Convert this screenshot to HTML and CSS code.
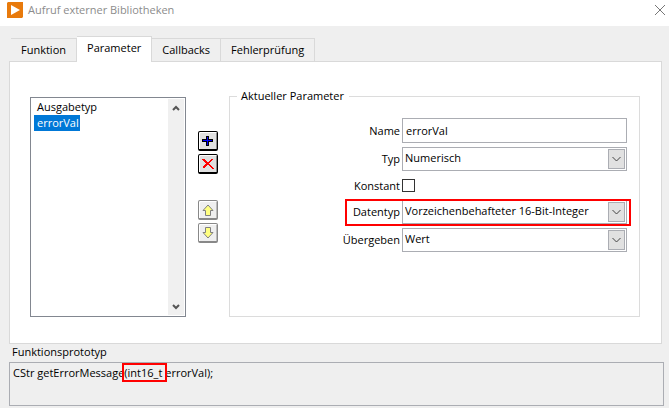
FILE: index.html
```html
<!DOCTYPE html>
<html lang="de">
<head>
    <meta charset="UTF-8">
    <meta name="viewport" content="width=device-width, initial-scale=1.0">
    <title>Aufruf externer Bibliotheken</title>
    <link rel="stylesheet" href="styles.css">
</head>
<body>
    <header class="titlebar">
        <svg class="logo" width="16" height="16" viewBox="0 0 16 16">
            <path d="M1 0H16V15L15 16H0V1Z" fill="#e87a0c"/>
            <path d="M4 3L13 8L4 13Z" fill="#fff"/>
        </svg>
        <h1>Aufruf externer Bibliotheken</h1>
        <button type="button" class="close" aria-label="Schließen">
            <svg width="10" height="10" viewBox="0 0 10 10">
                <path d="M0 0L10 10M10 0L0 10" stroke="#777" fill="none"/>
            </svg>
        </button>
    </header>

    <main class="dialog">
        <nav class="tabs" role="tablist">
            <button type="button" role="tab" class="tab">Funktion</button>
            <button type="button" role="tab" class="tab active" aria-selected="true">Parameter</button>
            <button type="button" role="tab" class="tab">Callbacks</button>
            <button type="button" role="tab" class="tab">Fehlerprüfung</button>
        </nav>

        <section class="panel">
            <div class="listbox">
                <ul role="listbox" aria-label="Parameter">
                    <li role="option"><span>Ausgabetyp</span></li>
                    <li role="option" aria-selected="true"><span class="selected">errorVal</span></li>
                </ul>
                <div class="scrollbar">
                    <button type="button" aria-label="Nach oben blättern">
                        <svg width="8" height="6" viewBox="0 0 8 6"><path d="M1 5L4 2L7 5" stroke="#555" stroke-width="2" fill="none"/></svg>
                    </button>
                    <button type="button" aria-label="Nach unten blättern">
                        <svg width="8" height="6" viewBox="0 0 8 6"><path d="M1 1L4 4L7 1" stroke="#555" stroke-width="2" fill="none"/></svg>
                    </button>
                </div>
            </div>

            <div class="tools">
                <div class="pair">
                    <button type="button" class="tool" aria-label="Hinzufügen">
                        <svg width="12" height="12" viewBox="0 0 12 12" shape-rendering="crispEdges">
                            <path d="M4 1H7V4H11V7H7V11H4V7H0V4H4Z" fill="#000"/>
                            <path d="M5 2H6V5H10V6H6V10H5V6H1V5H5Z" fill="#00f"/>
                        </svg>
                    </button>
                    <button type="button" class="tool" aria-label="Löschen">
                        <svg width="12" height="12" viewBox="0 0 12 12" shape-rendering="crispEdges">
                            <path d="M0 1H3V2H4V3H5V4H7V3H8V2H9V1H11V2H10V3H9V4H8V5H7V6H8V7H9V8H10V9H11V10H12V11H10V10H9V9H8V8H7V7H5V8H4V9H3V10H1V8H2V7H3V6H4V5H3V4H2V3H1V2H0Z" fill="#f00"/>
                        </svg>
                    </button>
                </div>
                <div class="pair">
                    <button type="button" class="tool" disabled aria-label="Nach oben">
                        <svg width="12" height="12" viewBox="0 0 12 12">
                            <path d="M6 1L11 6.500H8.500V11.500H3.500V6.500H1Z" fill="#ffff80" stroke="#808080"/>
                        </svg>
                    </button>
                    <button type="button" class="tool" disabled aria-label="Nach unten">
                        <svg width="12" height="12" viewBox="0 0 12 12">
                            <path d="M6 11L11 5.500H8.500V0.500H3.500V5.500H1Z" fill="#ffff80" stroke="#808080"/>
                        </svg>
                    </button>
                </div>
            </div>

            <fieldset class="current">
                <legend>Aktueller Parameter</legend>
                <div class="row">
                    <label for="name">Name</label>
                    <input id="name" class="text" type="text" value="errorVal">
                </div>
                <div class="row">
                    <label for="typ">Typ</label>
                    <div class="combo">
                        <select id="typ"><option>Numerisch</option></select>
                        <svg class="arrow" viewBox="0 0 15 18"><path d="M3.500 7L7.500 11L11.500 7" stroke="#444" fill="none"/></svg>
                    </div>
                </div>
                <div class="row">
                    <label for="konstant">Konstant</label>
                    <input id="konstant" class="check" type="checkbox">
                </div>
                <div class="row marked">
                    <label for="datentyp">Datentyp</label>
                    <div class="combo">
                        <select id="datentyp"><option>Vorzeichenbehafteter 16-Bit-Integer</option></select>
                        <svg class="arrow" viewBox="0 0 15 18"><path d="M3.500 7L7.500 11L11.500 7" stroke="#444" fill="none"/></svg>
                    </div>
                </div>
                <div class="row">
                    <label for="uebergeben">Übergeben</label>
                    <div class="combo">
                        <select id="uebergeben"><option>Wert</option></select>
                        <svg class="arrow" viewBox="0 0 15 18"><path d="M3.500 7L7.500 11L11.500 7" stroke="#444" fill="none"/></svg>
                    </div>
                </div>
            </fieldset>
        </section>

        <h2>Funktionsprototyp</h2>
        <div class="prototype">CStr getErrorMessage<span class="marked">(int16_t </span>errorVal);</div>
    </main>
</body>
</html>
```
FILE: styles.css
```css
* {
    box-sizing: border-box;
}
body {
    margin: 0;
    min-height: 100vh;
    display: flex;
    flex-direction: column;
    background-color: #efefef;
    color: #000;
    font: 11px/16px "Open Sans", "Noto Sans", sans-serif;
}
button, input, select {
    font: inherit;
    color: inherit;
    margin: 0;
    padding: 0;
}
h1, h2 {
    margin: 0;
    font-size: 11px;
    font-weight: normal;
}
svg {
    display: block;
}

.titlebar {
    display: flex;
    align-items: center;
    height: 26px;
    padding: 0 4px 6px 7px;
    background-color: #fff;
    color: #8c8c8c;
}
.titlebar h1 {
    flex: 1;
    margin-left: 5px;
}
.close {
    border: 0;
    padding: 0;
    background: none;
}

.dialog {
    flex: 1;
    display: flex;
    flex-direction: column;
    padding: 10px 5px 2px 9px;
}

.tabs {
    display: flex;
    align-items: flex-end;
    padding-left: 2px;
}
.tab {
    height: 23px;
    padding: 0 10px;
    border: 1px solid #d9d9d9;
    border-width: 1px 1px 0 0;
    background-color: #efefef;
}
.tab.active {
    height: 26px;
    margin-bottom: -1px;
    padding-bottom: 3px;
    background-color: #fff;
    position: relative;
}

.panel {
    display: flex;
    flex: 1;
    margin-right: 2px;
    padding: 35px 21px 26px 20px;
    border: 1px solid #d9d9d9;
    background-color: #fff;
}

.listbox {
    display: flex;
    width: 156px;
    padding: 1px;
    border: 1px solid #828790;
}
.listbox ul {
    flex: 1;
    margin: 0;
    padding: 0 2px;
    list-style: none;
}
.listbox span {
    display: inline-block;
    padding: 0 1px 0 3px;
}
.listbox .selected {
    background-color: #0078d7;
    color: #fff;
}
.scrollbar {
    display: flex;
    flex-direction: column;
    justify-content: space-between;
    width: 16px;
    background-color: #f0f0f0;
}
.scrollbar button {
    display: flex;
    align-items: center;
    justify-content: center;
    height: 17px;
    border: 0;
    background: none;
}

.tools {
    display: flex;
    flex-direction: column;
    gap: 26px;
    padding: 34px 11px 0 12px;
}
.pair {
    display: flex;
    flex-direction: column;
    gap: 3px;
}
.tool {
    display: flex;
    align-items: center;
    justify-content: center;
    width: 20px;
    height: 20px;
    border: 1px solid #000;
    border-bottom-width: 2px;
    border-radius: 2px;
    background-color: #e0e0e0;
    box-shadow: inset 1px 1px #fff, inset -1px 0 #888;
}
.tool:disabled {
    border-color: #888;
    background-color: #efefef;
    box-shadow: inset 1px 1px #fff, inset -1px 0 #bbb;
}

.current {
    position: relative;
    flex: 1;
    min-width: 0;
    display: flex;
    flex-direction: column;
    gap: 4px;
    margin: -9px 0 0;
    padding: 14px 12px 0 11px;
    border: 1px solid #dcdcdc;
}
.current legend {
    margin-left: -4px;
    padding: 0 5px 0 4px;
}
.row {
    display: grid;
    grid-template-columns: 159px 1fr;
    column-gap: 2px;
    align-items: center;
    min-height: 21px;
}
.row label {
    text-align: right;
}
.text {
    height: 25px;
    min-width: 0;
    padding: 0 3px;
    border: 1px solid #abadb3;
}
.combo {
    position: relative;
    height: 24px;
    border: 1px solid #abadb3;
}
.combo select {
    width: 100%;
    height: 20px;
    padding: 0 20px 0 2px;
    border: 0;
    appearance: none;
    background: none;
}
.arrow {
    position: absolute;
    top: 1px;
    right: 1px;
    width: 17px;
    height: 20px;
    border: 1px solid #abadb3;
    background-color: #e1e1e1;
    pointer-events: none;
}
.check {
    appearance: none;
    width: 13px;
    height: 13px;
    border: 1px solid #333;
    background-color: #fff;
}
.row.marked {
    position: relative;
}
.row.marked::after {
    content: "";
    position: absolute;
    inset: -1px -4px -2px 104px;
    border: 2px solid #f00;
    pointer-events: none;
}

h2 {
    padding: 0 3px 2px;
}
.prototype {
    height: 44px;
    padding: 2px 3px;
    border: 1px solid #abadb3;
}
.prototype .marked {
    outline: 2px solid #f00;
}
```
